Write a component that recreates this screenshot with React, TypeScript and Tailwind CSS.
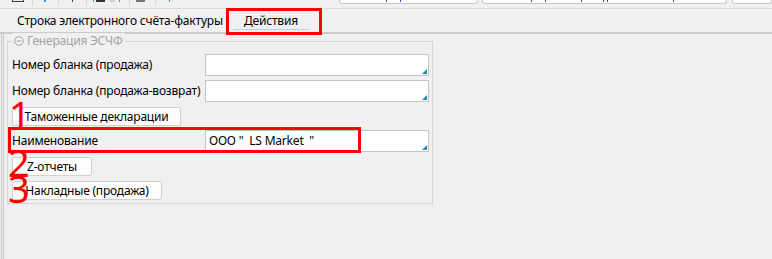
import React from "react";

const font = { fontFamily: '"Noto Sans", "Open Sans", sans-serif', letterSpacing: "-0.2px" };
const numFont = { fontFamily: '"Noto Sans", sans-serif', letterSpacing: "0px" };

function Field({ text }: { text?: string }) {
  return (
    <div className="relative w-[224px] h-[22px] bg-white border border-[#c4c4c4] flex items-center pl-[3px] text-[12px] text-black whitespace-pre">
      {text}
      <svg className="absolute right-[1px] bottom-[1px]" width="5" height="5" viewBox="0 0 5 5">
        <polygon points="5,0 5,5 0,5" fill="#1d87c5" />
      </svg>
    </div>
  );
}

function Btn({ label, w }: { label: string; w: string }) {
  return (
    <div className={`${w} h-[19px] bg-[#fdfdfd] border border-[#d0d0d0] rounded-[2px] flex items-center justify-center text-[12px] text-black`}>
      {label}
    </div>
  );
}

function Sep() {
  return <div className="w-px h-[6px] bg-[#d8d8d8] self-start" />;
}

function Box({ w, marks }: { w: string; marks: number[] }) {
  return (
    <div className={`${w} h-[4px] bg-white border-b border-x border-[#c8c8c8] rounded-b-[3px] flex items-end`}>
      {marks.map((m, i) => (
        <div key={i} className="w-px h-[2px] bg-[#7a2a9a] mb-[1px]" style={{ marginLeft: m }} />
      ))}
    </div>
  );
}

export default function App() {
  return (
    <div className="w-[772px] h-[259px] bg-[#f0f0f0] overflow-hidden flex flex-col text-black" style={font}>
      {/* toolbar remnant */}
      <div className="h-[9px] border-b border-[#dadada] shrink-0 flex items-start">
        <div className="ml-[12px] w-[16px] h-[2px] border-b border-x border-[#3a3a3a]" />
        <div className="ml-[8px]"><Sep /></div>
        <div className="ml-[11px] w-[3px] h-[2px] bg-[#2a9be0]" />
        <div className="ml-[12px]"><Sep /></div>
        <div className="ml-[13px] w-[2px] h-[2px] bg-[#444]" />
        <div className="ml-[13px]"><Sep /></div>
        <div className="ml-[6px] w-[2px] h-[2px] bg-[#2a9be0]" />
        <div className="ml-[2px] w-[12px] h-[2px] bg-[#333]" />
        <div className="ml-[5px] w-[8px] h-[2px] bg-[#d0d0d0]" />
        <div className="ml-[4px] w-[2px] h-[2px] bg-[#2a9be0]" />
        <div className="ml-[9px]"><Sep /></div>
        <div className="ml-[6px] w-[12px] h-[2px] bg-[#777]" />
        <div className="ml-[10px]"><Sep /></div>
        <div className="ml-[13px] w-[2px] h-[2px] bg-[#2a9be0]" />
        <div className="ml-[169px]"><Box w="w-[139px]" marks={[46, 13]} /></div>
        <div className="ml-[4px]"><Box w="w-[245px]" marks={[48, 13, 35, 21, 3, 65]} /></div>
        <div className="ml-[5px]"><Box w="w-[40px]" marks={[]} /></div>
      </div>

      {/* tabs */}
      <div className="relative h-[25px] shrink-0 flex items-center border-b-2 border-[#cbcbcb] text-[12px]">
        <div className="w-[233px] pl-[17px]">Строка электронного счёта-фактуры</div>
        <div className="relative w-[76px] h-full flex items-center justify-center">
          Действия
          <div className="absolute left-0 right-0 bottom-[2px] h-px bg-[#a9d3ee]" />
        </div>
        <div className="absolute left-[226px] top-[-1px] w-[96px] h-[27px] border-[3px] border-[#ff0000]" />
      </div>

      {/* body */}
      <div className="flex-1 flex">
        <div className="w-[1px] ml-[1px] bg-[#c8c8c8]" />
        <div className="w-[1px] ml-[1px] bg-[#c8c8c8]" />
        <div className="ml-[3px] mt-[7px] relative w-[426px] h-[163px] border border-[#d5d5d5]">
          <div className="absolute left-[4px] top-[-9px] bg-[#f0f0f0] px-[2px] text-[12px] text-[#a3a3a3] leading-[16px] flex items-center">
            <svg width="10" height="10" viewBox="0 0 10 10" className="mr-[3px]">
              <circle cx="5" cy="5" r="4.3" fill="none" stroke="#a3a3a3" strokeWidth="1" />
              <line x1="2.8" y1="5" x2="7.2" y2="5" stroke="#a3a3a3" strokeWidth="1" />
            </svg>
            Генерация ЭСЧФ
          </div>

          <div className="flex flex-col gap-[4px] pl-[4px] pt-[12px]">
            <div className="flex items-center h-[22px]">
              <div className="w-[193px] text-[12px] whitespace-nowrap">Номер бланка (продажа)</div>
              <Field />
            </div>
            <div className="flex items-center h-[22px]">
              <div className="w-[193px] text-[12px] whitespace-nowrap">Номер бланка (продажа-возврат)</div>
              <Field />
            </div>
            <div className="pt-[1px]">
              <Btn label="Таможенные декларации" w="w-[169px]" />
            </div>
            <div className="relative flex items-center h-[22px]">
              <div className="w-[193px] text-[12px]">Наименование</div>
              <Field text={'ООО "  LS Market  "'} />
              <div className="absolute left-[-4px] top-[-3px] w-[353px] h-[26px] border-[3px] border-[#ff0000]" />
            </div>
            <div className="pt-[1px]">
              <Btn label="Z-отчеты" w="w-[80px]" />
            </div>
            <div className="pt-[1px]">
              <Btn label="Накладные (продажа)" w="w-[150px]" />
            </div>
          </div>

          <div className="absolute left-[1px] top-[53px] text-[38px] leading-none text-[#ff0000]" style={numFont}>1</div>
          <div className="absolute left-[0px] top-[101px] text-[38px] leading-none text-[#ff0000]" style={numFont}>2</div>
          <div className="absolute left-[0px] top-[127px] text-[38px] leading-none text-[#ff0000]" style={numFont}>3</div>
        </div>
      </div>
    </div>
  );
}
